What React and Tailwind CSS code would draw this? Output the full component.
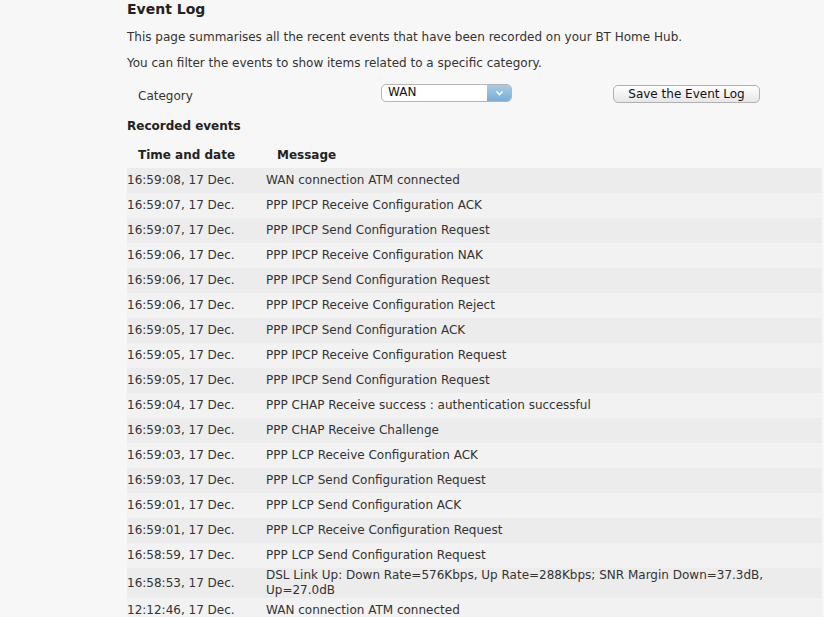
import React from 'react';

const events = [
  ['16:59:08, 17 Dec.', 'WAN connection ATM connected'],
  ['16:59:07, 17 Dec.', 'PPP IPCP Receive Configuration ACK'],
  ['16:59:07, 17 Dec.', 'PPP IPCP Send Configuration Request'],
  ['16:59:06, 17 Dec.', 'PPP IPCP Receive Configuration NAK'],
  ['16:59:06, 17 Dec.', 'PPP IPCP Send Configuration Request'],
  ['16:59:06, 17 Dec.', 'PPP IPCP Receive Configuration Reject'],
  ['16:59:05, 17 Dec.', 'PPP IPCP Send Configuration ACK'],
  ['16:59:05, 17 Dec.', 'PPP IPCP Receive Configuration Request'],
  ['16:59:05, 17 Dec.', 'PPP IPCP Send Configuration Request'],
  ['16:59:04, 17 Dec.', 'PPP CHAP Receive success : authentication successful'],
  ['16:59:03, 17 Dec.', 'PPP CHAP Receive Challenge'],
  ['16:59:03, 17 Dec.', 'PPP LCP Receive Configuration ACK'],
  ['16:59:03, 17 Dec.', 'PPP LCP Send Configuration Request'],
  ['16:59:01, 17 Dec.', 'PPP LCP Send Configuration ACK'],
  ['16:59:01, 17 Dec.', 'PPP LCP Receive Configuration Request'],
  ['16:58:59, 17 Dec.', 'PPP LCP Send Configuration Request'],
  ['16:58:53, 17 Dec.', 'DSL Link Up: Down Rate=576Kbps, Up Rate=288Kbps; SNR Margin Down=37.3dB, Up=27.0dB'],
  ['12:12:46, 17 Dec.', 'WAN connection ATM connected'],
];

const App = () => {
  return (
    <div className="min-h-[617px] bg-[#f7f7f7] text-[#333] text-[12px] leading-[15px] font-['DejaVu_Sans',Verdana,sans-serif] overflow-hidden">
      <div className="pl-[127px] w-[822px]">
        {/* Title */}
        <h1 className="text-[14px] leading-[18px] font-bold text-[#222]">Event Log</h1>
        <p className="mt-[12px]">This page summarises all the recent events that have been recorded on your BT Home Hub.</p>
        <p className="mt-[11px]">You can filter the events to show items related to a specific category.</p>

        {/* Category filter */}
        <div className="flex items-center mt-[12px] h-[20px]">
          <span className="w-[254px] pl-[11px] pt-[6px]">Category</span>
          <div className="flex h-[18px] w-[131px] rounded-[5px] border border-[#b5b5b5] bg-white overflow-hidden">
            <span className="flex-1 pl-[6px] text-[12px] leading-[14px] text-[#111]">WAN</span>
            <span className="w-[24px] flex items-center justify-center bg-gradient-to-b from-[#a8cbe6] to-[#7aaed6]">
              <svg width="9" height="6" viewBox="0 0 9 6">
                <path d="M1.5 1.5 L4.5 4.5 L7.5 1.5" stroke="#fff" strokeWidth="1.6" fill="none" />
              </svg>
            </span>
          </div>
          <button className="ml-[101px] mt-[2px] w-[147px] h-[18px] rounded-[5px] border border-[#b0b0b0] bg-gradient-to-b from-[#ffffff] to-[#e6e6e6] text-[12px] leading-[14px] text-[#111]">
            Save the Event Log
          </button>
        </div>

        <h2 className="font-bold mt-[16px] text-[#222]">Recorded events</h2>

        {/* Event table */}
        <div className="mt-[14px] flex font-bold text-[#222] h-[20px]">
          <span className="w-[150px] pl-[11px]">Time and date</span>
          <span>Message</span>
        </div>
        <div>
          {events.map(([time, msg], i) => (
            <div
              key={i}
              className={`flex items-center min-h-[25px] ${i % 2 === 0 ? 'bg-[#ececec]' : 'bg-[#f2f2f2]'}`}
            >
              <span className="w-[139px] shrink-0">{time}</span>
              <span className="pr-[40px]">{msg}</span>
            </div>
          ))}
        </div>
      </div>
    </div>
  );
};

export default App;
